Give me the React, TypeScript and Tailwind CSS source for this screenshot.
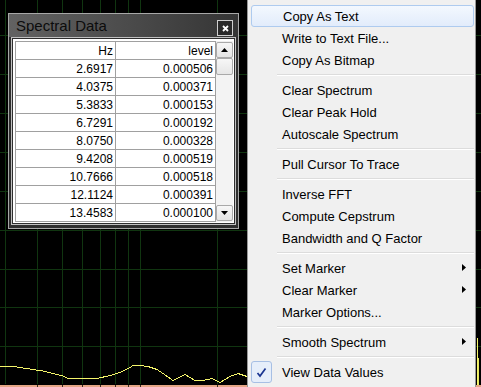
import React from "react";

const rows: [string, string][] = [
  ["2.6917", "0.000506"],
  ["4.0375", "0.000371"],
  ["5.3833", "0.000153"],
  ["6.7291", "0.000192"],
  ["8.0750", "0.000328"],
  ["9.4208", "0.000519"],
  ["10.7666", "0.000518"],
  ["12.1124", "0.000391"],
  ["13.4583", "0.000100"],
];

type Item = { label?: string; sep?: boolean; sub?: boolean; checked?: boolean; hl?: boolean };

const menu: Item[] = [
  { label: "Copy As Text", hl: true },
  { label: "Write to Text File..." },
  { label: "Copy As Bitmap" },
  { sep: true },
  { label: "Clear Spectrum" },
  { label: "Clear Peak Hold" },
  { label: "Autoscale Spectrum" },
  { sep: true },
  { label: "Pull Cursor To Trace" },
  { sep: true },
  { label: "Inverse FFT" },
  { label: "Compute Cepstrum" },
  { label: "Bandwidth and Q Factor" },
  { sep: true },
  { label: "Set Marker", sub: true },
  { label: "Clear Marker", sub: true },
  { label: "Marker Options..." },
  { sep: true },
  { label: "Smooth Spectrum", sub: true },
  { sep: true },
  { label: "View Data Values", checked: true },
];

const vLines = [5, 37, 62, 82, 100, 115, 128, 140, 217];
const hLines = [35, 74, 113, 152, 191, 230, 269, 307, 346];

function Chart() {
  return (
    <svg className="absolute inset-0" width={481} height={387} shapeRendering="crispEdges">
      {vLines.map((x) => (
        <line key={"v" + x} x1={x + 0.5} y1={0} x2={x + 0.5} y2={384} stroke="#103510" strokeWidth={1} />
      ))}
      {hLines.map((y) => (
        <line key={"h" + y} x1={0} y1={y + 0.5} x2={481} y2={y + 0.5} stroke="#103510" strokeWidth={1} />
      ))}
      <polyline
        fill="none"
        stroke="#f4f46a"
        strokeWidth={1}
        points="0,366 10,366 20,367.5 33,369.5 43,371 53,373.5 63,376 68,378.5 97,378.5 110,375.5 120,372.5 130,367.5 133,365.5 140,365.5 148,366.5 157,369.5 163,373.5 173,380.5 185,374.5 195,380.5 203,380.5 212,378.5 220,382.5 230,376.5 238,373.5 247,376.5 260,380"
      />
      <line x1={477.5} y1={338} x2={477.5} y2={387} stroke="#f4f46a" strokeWidth={1} />
      <line x1={478.5} y1={358} x2={478.5} y2={387} stroke="#e8e860" strokeWidth={1} />
      <rect x={0} y={385} width={481} height={2} fill="#e4a585" />
      {[37, 62, 82, 100, 115, 128, 140, 217].map((x) => (
        <rect key={"t" + x} x={x} y={385} width={1} height={2} fill="#3a2a20" />
      ))}
    </svg>
  );
}

function ScrollButton({ up }: { up: boolean }) {
  return (
    <div className="h-[16px] w-full border border-[#a9a9a9] rounded-[2px] bg-gradient-to-b from-[#f7f7f7] to-[#e4e4e4] flex items-center justify-center">
      <svg width="7" height="4" viewBox="0 0 7 4">
        {up ? <polygon points="3.5,0 7,4 0,4" fill="#000" /> : <polygon points="0,0 7,0 3.5,4" fill="#000" />}
      </svg>
    </div>
  );
}

function DataWindow() {
  return (
    <div className="absolute left-[8px] top-[13px] w-[231px] h-[216px] border border-[#a8a8a8] bg-[#2e2e2e] flex flex-col">
      <div className="h-[23px] flex items-center justify-between pl-[7px] pr-[5px] bg-gradient-to-r from-[#626262] via-[#4c4c4c] to-[#353535]">
        <span className="font-['Liberation_Sans',Arial,sans-serif] text-[15px] text-[#0c0c0c] leading-none">Spectral Data</span>
        <div className="mt-[5px] w-[16px] h-[16px] border border-[#cfcfcf] bg-[#2a2a2a] flex items-center justify-center">
          <svg width="7" height="7" viewBox="0 0 7 7">
            <path d="M1 1 L6 6 M6 1 L1 6" stroke="#fff" strokeWidth="1.8" />
          </svg>
        </div>
      </div>
      <div className="flex-1 px-[2px] pb-[3px] flex flex-col">
        <div className="flex-1 border border-[#c0c0c0] p-[1px] bg-[#2e2e2e] flex">
          <div className="flex-1 bg-white pl-[2px] pt-[2px] pr-[1px] pb-[1px] flex">
            <div className="border-t border-l border-[#a0a0a0] font-['Liberation_Sans',Arial,sans-serif] text-[12px] text-black">
              <div className="flex h-[18px]">
                <div className="w-[100px] border-r border-b border-[#a0a0a0] flex items-center justify-end pr-[2px]">Hz</div>
                <div className="w-[100px] border-r border-b border-[#a0a0a0] flex items-center justify-end pr-[2px]">level</div>
              </div>
              {rows.map(([hz, lv]) => (
                <div key={hz} className="flex h-[18px]">
                  <div className="w-[100px] border-r border-b border-[#a0a0a0] flex items-center justify-end pr-[2px]">{hz}</div>
                  <div className="w-[100px] border-r border-b border-[#a0a0a0] flex items-center justify-end pr-[2px]">{lv}</div>
                </div>
              ))}
            </div>
            <div className="w-[17px] pt-[1px] pb-[1px] flex flex-col bg-[#efefef]">
              <ScrollButton up />
              <div className="h-[17px] border border-[#a9a9a9] rounded-[2px] bg-gradient-to-b from-[#f7f7f7] to-[#e6e6e6]" />
              <div className="flex-1 bg-[#f3f3f3]" />
              <ScrollButton up={false} />
            </div>
          </div>
        </div>
      </div>
    </div>
  );
}

function ContextMenu() {
  return (
    <div className="absolute left-[247px] top-[-1px] w-[229px] border border-[#979797] bg-[#f0f0f0] pl-[3px] pr-[1px] pt-[5px] pb-[4px] font-['Liberation_Sans',Arial,sans-serif] text-[13px] text-black">
      {menu.map((m, i) =>
        m.sep ? (
          <div key={i} className="h-[8px] flex items-center pl-[26px]">
            <div className="flex-1 h-[2px] border-t border-[#dcdcdc] border-b border-b-white" />
          </div>
        ) : (
          <div
            key={i}
            className={
              "relative h-[22px] flex items-center pl-[31px] " +
              (m.hl ? "rounded-[3px] border border-[#aecbef] bg-gradient-to-b from-[#f3f8fe] to-[#e2ecfb] pl-[30px]" : "")
            }
          >
            {m.checked && (
              <div className="absolute left-0 top-0 w-[21px] h-[22px] rounded-[3px] border border-[#a7bfe4] bg-[#e6eefa] flex items-center justify-center">
                <svg width="11" height="11" viewBox="0 0 11 11">
                  <path d="M1.5 6 L4 9 L9.5 1.5" fill="none" stroke="#1b3591" strokeWidth="1.7" />
                </svg>
              </div>
            )}
            <span className="leading-none">{m.label}</span>
            {m.sub && (
              <svg className="absolute right-[8px] top-[7px]" width="4" height="7" viewBox="0 0 4 7">
                <polygon points="0,0 4,3.5 0,7" fill="#000" />
              </svg>
            )}
          </div>
        )
      )}
    </div>
  );
}

export default function App() {
  return (
    <div className="relative w-[481px] h-[387px] bg-black overflow-hidden">
      <Chart />
      <DataWindow />
      <ContextMenu />
    </div>
  );
}
